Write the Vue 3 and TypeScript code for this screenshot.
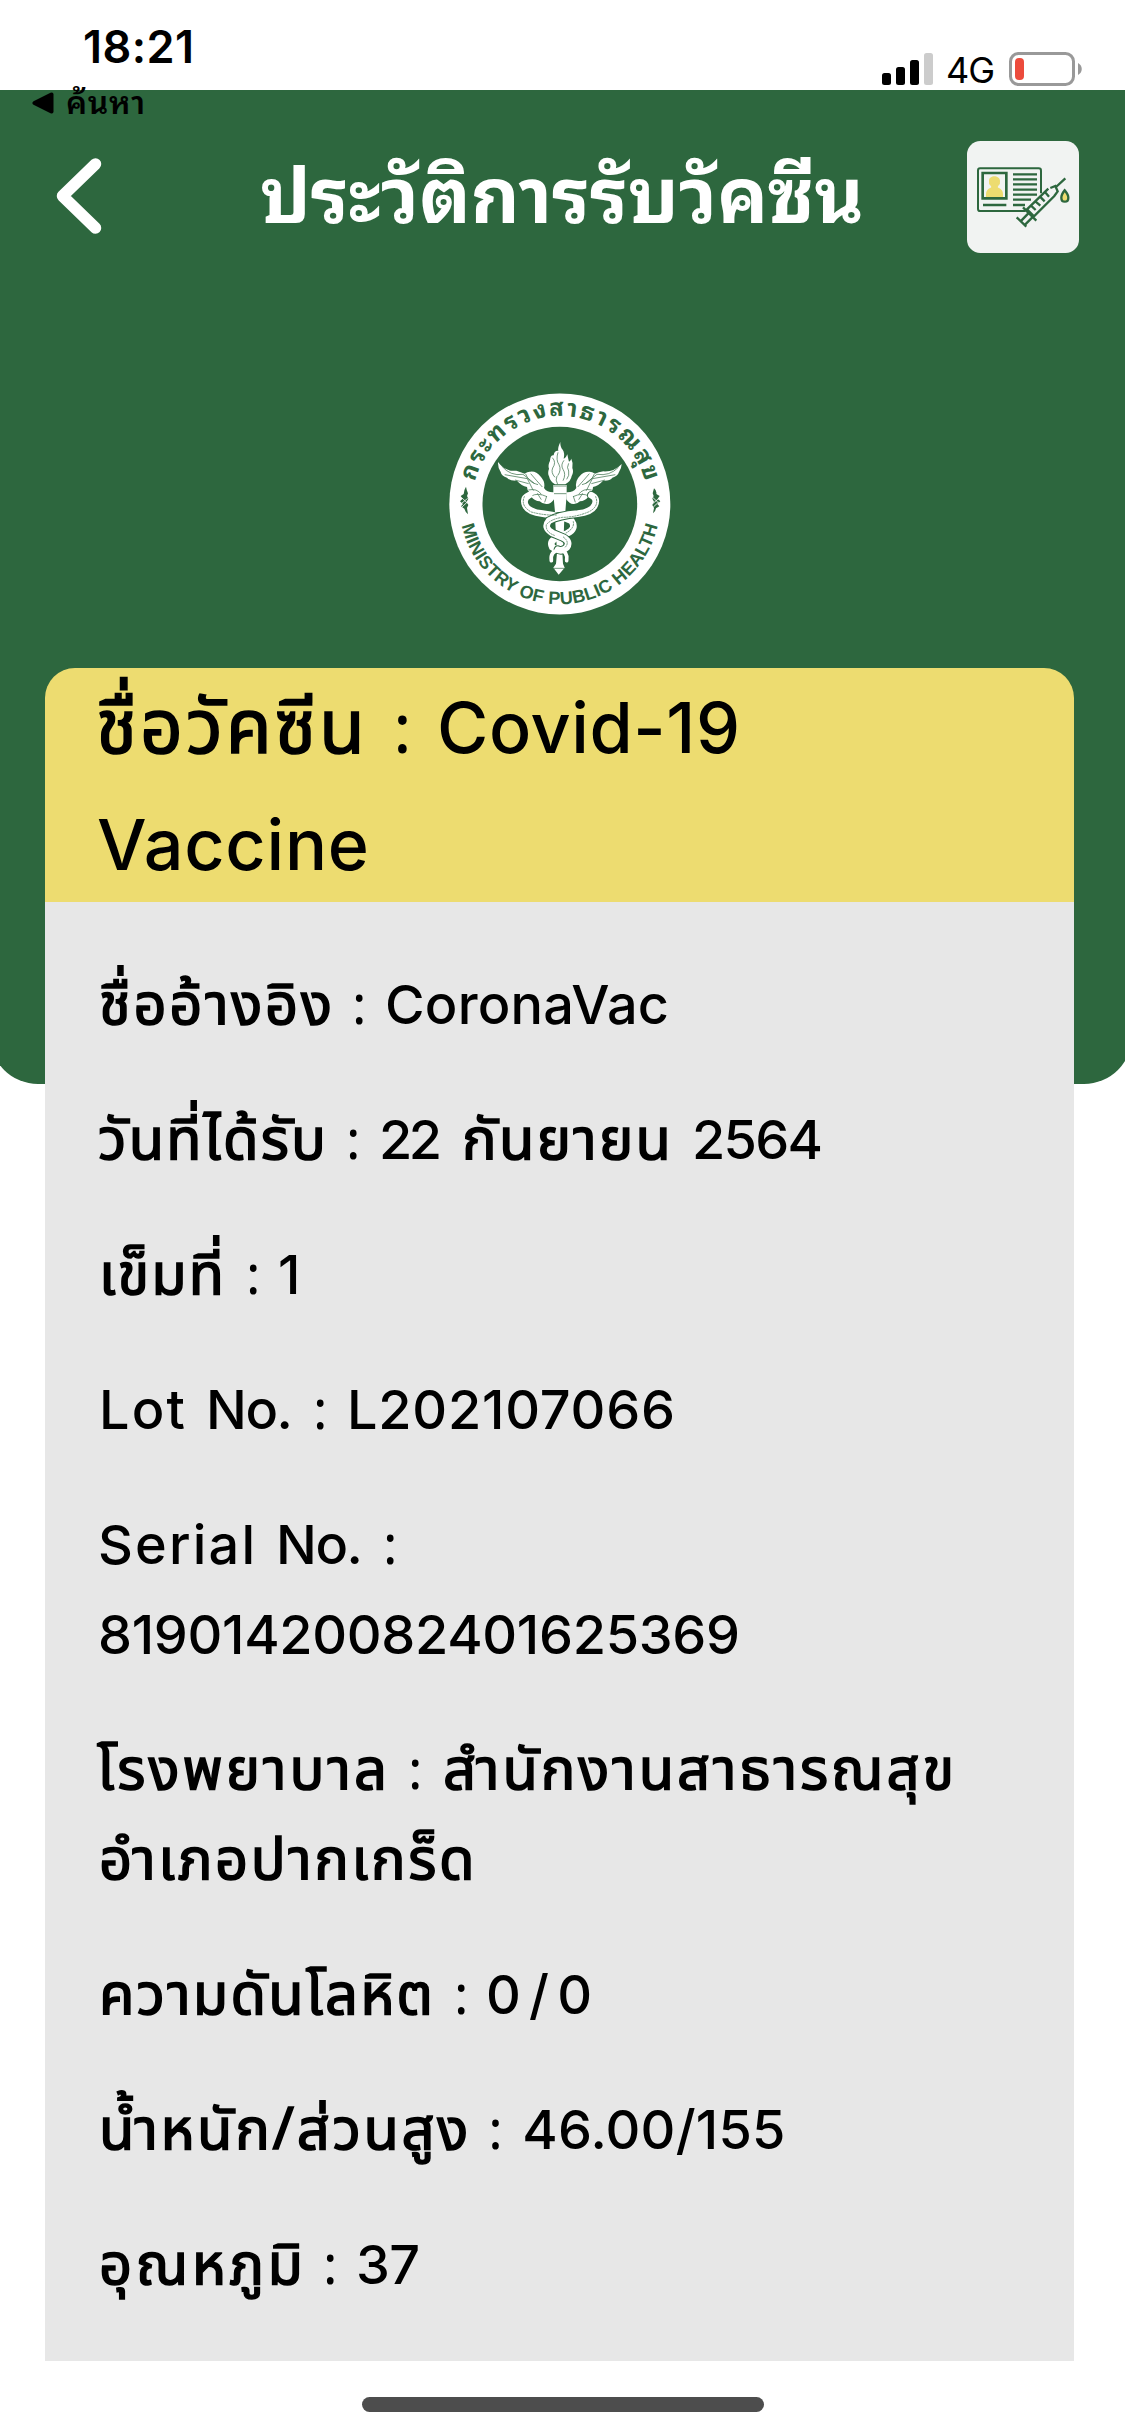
<script setup lang="ts">
import type { Directive } from 'vue'

interface Word { t: string; x: number; e: number }
interface Piece { t: string; w: number; kind: string }

const w = (t: string, x: number, e: number): Word => ({ t, x, e })

const titleLines: Word[][] = [
  [w('ชื่อวัคซีน', 99, 362), w(':', 396, 404), w('Covid-19', 440, 737)],
  [w('Vaccine', 100, 366)],
]

const records: Word[][][] = [
  [[w('ชื่ออ้างอิง', 102, 329), w(':', 355, 361), w('CoronaVac', 388, 666)]],
  [[w('วันที่ได้รับ', 101, 323), w(':', 349, 355), w('22', 382, 439), w('กันยายน', 465, 668), w('2564', 695, 820)]],
  [[w('เข็มที่', 102, 221), w(':', 249, 255), w('1', 281, 299)]],
  [[w('Lot', 102, 182), w('No.', 209, 290), w(':', 316, 322), w('L202107066', 350, 672)]],
  [[w('Serial', 101, 252), w('No.', 279, 360), w(':', 386, 392)], [w('81901420082401625369', 101, 737)]],
  [[w('โรงพยาบาล', 100, 384), w(':', 411, 417), w('สำนักงานสาธารณสุข', 446, 954)], [w('อำเภอปากเกร็ด', 102, 474)]],
  [[w('ความดันโลหิต', 102, 430), w(':', 457, 463), w('0/0', 489, 589)]],
  [[w('น้ำหนัก/ส่วนสูง', 102, 468), w(':', 494, 500), w('46.00/155', 528, 785)]],
  [[w('อุณหภูมิ', 102, 300), w(':', 326, 332), w('37', 359, 417)]],
]

const CARD_LEFT = 45
const BEARING = 3

// Turns word extents into a run of words separated by sized spaces.
function pieces(line: Word[]): Piece[] {
  const out: Piece[] = []
  let cursor = CARD_LEFT
  line.forEach((word, i) => {
    const start = word.x - BEARING
    out.push({ t: i ? ' ' : '', w: start - cursor, kind: 'gap' })
    const thai = /[\u0e00-\u0e7f]/.test(word.t)
    const kind = word.t === ':' ? 'colon' : thai ? 'thai' : 'latin'
    out.push({ t: word.t, w: word.e - word.x + BEARING * 2, kind })
    cursor = word.e + BEARING
  })
  return out
}

// Tracks a word so that it fills the width it was given.
const vFit: Directive<HTMLElement, number> = {
  mounted(el, binding) {
    if (el.textContent === ':') {
      el.style.width = `${binding.value}px`
      return
    }
    el.style.letterSpacing = '0px'
    const natural = el.getBoundingClientRect().width
    const count = [...(el.textContent ?? '').replace(/[\u0e31\u0e34-\u0e3a\u0e47-\u0e4e]/g, '')].length
    if (count > 1) {
      const spacing = (binding.value - natural) / (count - 1)
      el.style.letterSpacing = `${spacing}px`
      el.style.marginRight = `${-spacing}px`
    }
  },
}
</script>

<template>
  <div class="screen">
    <header class="status">
      <span v-fit="111" class="clock">18:21</span>
      <div class="indicators">
        <svg width="52" height="34" viewBox="0 0 52 34">
          <rect x="0" y="21" width="9" height="12" rx="2.5" />
          <rect x="14" y="15" width="9" height="18" rx="2.5" />
          <rect x="28" y="8" width="9" height="25" rx="2.5" />
          <rect x="42" y="1" width="9" height="32" rx="2.5" fill="#ccc" />
        </svg>
        <span class="network">4G</span>
        <svg width="74" height="34" viewBox="0 0 74 34">
          <rect x="1.5" y="1.5" width="63" height="31" rx="8" fill="none" stroke="#999" stroke-width="3" />
          <rect x="6" y="6" width="9" height="22" rx="4" fill="#ec4b3c" />
          <path d="M69 11C74 13.500 74 20.500 69 23Z" fill="#999" />
        </svg>
      </div>
    </header>

    <section class="hero">
      <div class="return">
        <svg width="22" height="22" viewBox="0 0 22 22">
          <path d="M1.500 9.200 18.500 .8Q21.500 0 21.500 2.500V19.500Q21.500 22 18.500 21.200L1.500 12.800Q-.8 11 1.500 9.200Z" />
        </svg>
        <span v-fit="79" class="return-text">ค้นหา</span>
      </div>

      <div class="nav">
        <svg class="chevron" width="46" height="76" viewBox="0 0 46 76">
          <path d="M39.500 6 6.500 38 39.500 70" fill="none" stroke="#fff" stroke-width="11.500" stroke-linecap="round" stroke-linejoin="round" />
        </svg>
        <h1 class="heading"><span v-fit="604">ประวัติการรับวัคซีน</span></h1>
        <svg class="card-icon" width="112" height="112" viewBox="6 17 336 336">
          <rect x="6" y="17" width="336" height="336" rx="40" fill="#f1f3f2" />
          <g fill="none" stroke="#2d673e" stroke-width="6">
            <path d="M182 227H45Q39 227 39 220V106Q39 99 45 99H221Q228 99 228 106V174" />
            <path d="M53 113H124V189H53Z" stroke-width="8" />
            <path d="M144 117H216M144 132H216M144 147H216M144 163H216M144 178H216M144 193H198M144 209H180M54 209H124" stroke-width="7" />
            <path d="M273 155 301 129M256 158 271 152 278 168 268 182 207 243 186 222 250 160M174 216 214 256M190 234 166 259M202 246 178 270M155 246 184 274M225 184 239 198M240 170 252 184M211 198 226 211M198 211 212 224" stroke-width="7" />
          </g>
          <path fill="#eddc70" d="M63 185V176Q63 162 77 157Q81 155 77 151Q70 145 72 136C72 118 104 118 105 136Q107 145 100 151Q96 155 100 157Q114 162 114 176V185Z" />
          <path d="M299 165Q289 178 289 187C289 203 310 203 310 187Q310 178 299 165Z" fill="#eddc70" stroke="#2d673e" stroke-width="7" />
        </svg>
      </div>

      <svg class="emblem" width="222" height="222" viewBox="56 41 666 666">
        <defs>
          <path id="arc-top" d="M125 374A264 264 0 0 1 653 374" />
          <path id="arc-bottom" d="M87 374A301 301 0 0 0 689 374" />
        </defs>
        <circle cx="388.500" cy="374" r="331.500" fill="#fff" />
        <circle cx="388.500" cy="374" r="232" fill="#2d673e" />
        <text class="seal-thai" text-anchor="middle">
          <textPath href="#arc-top" startOffset="50%" textLength="695">กระทรวงสาธารณสุข</textPath>
        </text>
        <text class="seal-latin" text-anchor="middle">
          <textPath href="#arc-bottom" startOffset="50%" textLength="815">MINISTRY OF PUBLIC HEALTH</textPath>
        </text>
        <g fill="#2d673e">
          <path d="M107 322Q109 334 113 342L110 350 114 358 109 367 114 377 110 386 113 405Q104 396 102 388L92 381 98 374 89 366 97 358 91 350 100 344Q101 331 107 322Z" />
          <path d="M671 327Q680 334 678 344L688 350 682 358 690 366 681 374 687 381 677 387Q676 396 668 402L671 386 666 377 671 367 666 358 670 350 667 342Z" />
        </g>
        <g stroke="#fff" stroke-width="2.500" fill="none">
          <path d="M94 355 112 372M94 372 112 357M95 383 111 368M668 355 686 372M668 372 686 357M669 383 685 368" />
        </g>

        <!-- wings -->
        <g fill="#fff">
          <path d="M203 248Q225 278 258 274Q272 279 283 283Q292 276 300 277Q318 275 330 291Q346 308 341 326Q350 340 371 339V360Q362 374 350 374Q337 375 328 366Q313 365 303 352Q291 351 298 340Q290 334 290 323Q274 320 260 304Q238 305 230 295Q214 291 211 278Q202 265 203 248Z" />
          <path d="M574 254Q552 278 519 276Q505 279 494 283Q484 276 476 277Q460 276 449 289Q433 304 438 326Q429 340 408 339V360Q417 374 429 374Q440 375 449 366Q464 365 474 352Q486 351 479 340Q488 334 488 323Q504 320 518 304Q540 305 546 295Q562 291 566 278Q574 265 574 254Z" />
          <!-- flame -->
          <path d="M390 188Q381 207 384 214Q371 213 370 228Q360 227 359 244Q352 258 356 268Q351 282 356 291Q359 306 374 315H405Q422 305 424 290Q431 278 426 266Q429 250 422 235Q425 240 416 247Q413 237 411 225Q405 238 400 238Q404 221 397 211Q389 203 390 188Z" />
          <!-- staff -->
          <path d="M369 317H409V345L405 398H374L369 345ZM374 414H402L399 500H379ZM380 520H396L398 553 403 565 385 586 369 565 377 553Z" />
        </g>
        <g fill="none" stroke="#2d673e" stroke-width="2">
          <path d="M366 235Q379 249 367 266Q361 280 374 294M383 219Q376 242 386 256Q394 272 382 289M401 243Q390 257 398 270Q408 285 398 304M415 252Q408 265 415 275Q418 289 409 300M380 290Q374 302 382 315M370 320H408M371 343H408M371 567H401" />
          <path d="M214 260Q240 291 278 285L312 312M223 286 291 298 309 334M254 302 295 313M286 284Q295 310 323 316M301 283Q318 303 336 323M294 332Q320 326 333 345M303 350Q322 339 350 352M321 342 333 361M349 351 343 369" />
          <path d="M564 264Q538 291 500 285L466 312M555 286 486 298 468 334M524 302 483 313M492 284Q482 310 455 316M477 283Q460 303 442 323M484 332Q458 326 445 345M475 350Q456 339 428 352M457 342 445 361M429 351 435 369" />
        </g>

        <!-- entwined serpents -->
        <g fill="none" stroke-linecap="round">
          <path d="M296 348Q276 357 285 378Q293 398 337 403Q397 411 423 424Q440 448 411 462L383 474Q355 484 366 504Q374 511 389 507" stroke="#fff" stroke-width="20" />
          <path d="M483 348Q503 357 493 378Q485 398 442 403Q384 408 356 424Q338 445 366 461L397 474Q422 486 409 505Q396 517 383 511" stroke="#2d673e" stroke-width="26" />
          <path d="M483 348Q503 357 493 378Q485 398 442 403Q384 408 356 424Q338 445 366 461L397 474Q422 486 409 505Q396 517 383 511" stroke="#fff" stroke-width="20" />
          <path d="M389 509Q414 518 409 544M386 512Q359 516 363 544" stroke="#fff" stroke-width="11" />
          <path d="M282 352Q270 380 303 398Q344 409 379 407M496 352Q508 382 474 398Q435 414 396 414Q362 419 348 436Q345 458 372 468M429 427Q433 447 407 461M399 473Q421 490 402 506" stroke="#2d673e" stroke-width="2" stroke-dasharray="4 4" />
        </g>
      </svg>
    </section>

    <main class="card">
      <div class="card-head">
        <div v-for="(line, i) in titleLines" :key="i" class="line">
          <template v-for="(p, j) in pieces(line)" :key="j">
            <span v-if="p.kind === 'gap'" class="gap" :style="{ width: p.w + 'px' }">{{ p.t }}</span>
            <span v-else v-fit="p.w" :class="p.kind">{{ p.t }}</span>
          </template>
        </div>
      </div>
      <div class="card-body">
        <div v-for="(record, r) in records" :key="r" class="record">
          <div v-for="(line, i) in record" :key="i" class="line">
            <template v-for="(p, j) in pieces(line)" :key="j">
              <span v-if="p.kind === 'gap'" class="gap" :style="{ width: p.w + 'px' }">{{ p.t }}</span>
              <span v-else v-fit="p.w" :class="p.kind">{{ p.t }}</span>
            </template>
          </div>
        </div>
      </div>
    </main>

    <div class="home-bar"></div>
  </div>
</template>

<style>
html,
body {
  margin: 0;
  background: #fff;
}
</style>

<style scoped>
.screen {
  width: 1125px;
  height: 2436px;
  overflow: hidden;
  background: #fff;
  color: #000;
  font-family: "Noto Sans", "Noto Sans Thai", sans-serif;
  display: flex;
  flex-direction: column;
}
.status {
  height: 90px;
  flex: none;
  display: flex;
  justify-content: space-between;
  box-sizing: border-box;
  padding: 20px 42px 0 83px;
}
.clock {
  font: 600 45px/54px Inter, sans-serif;
  white-space: nowrap;
  align-self: flex-start;
}
.indicators {
  display: flex;
  align-items: flex-start;
  padding-top: 32px;
}
.network {
  font: 400 36px/36px Inter, sans-serif;
  letter-spacing: -1px;
  margin: 0 14px 0 12px;
  width: 49px;
}
.hero {
  flex: none;
  height: 994px;
  margin: 0 -7px 0 -10px;
  padding-left: 10px;
  padding-right: 7px;
  box-sizing: border-box;
  background: #2d673e;
  border-radius: 0 0 48px 48px;
  display: flex;
  flex-direction: column;
}
.return {
  height: 50px;
  display: flex;
  align-items: flex-start;
  padding: 2px 0 0 32px;
  box-sizing: border-box;
}
.return-text {
  font-family: "Noto Sans Thai Looped", Thonburi, Loma, Waree, Garuda, "Noto Sans", sans-serif;
  font-size: 32px;
  line-height: 32px;
  font-weight: 600;
  margin-left: 12px;
  white-space: nowrap;
  margin-top: -8px;
}
.nav {
  height: 114px;
  display: flex;
  align-items: flex-start;
}
.chevron {
  margin: 18px 0 0 56px;
}
.heading {
  margin: 0 0 0 158px;
  width: 707px;
  font-family: "Noto Sans Thai Looped", Thonburi, Loma, Waree, Garuda, "Noto Sans", sans-serif;
  font-size: 76px;
  line-height: 98px;
  font-weight: 700;
  color: #fff;
  white-space: nowrap;
}
.card-icon {
  margin-top: 1px;
}
.emblem {
  margin: 139px 0 0 449px;
  overflow: visible;
}
.seal-thai {
  font: 700 72px "Noto Sans Thai Looped", Loma, Waree, Garuda, "Noto Sans", sans-serif;
  fill: #2d673e;
}
.seal-latin {
  font: 700 54px "Liberation Sans Narrow", "Liberation Sans", sans-serif;
  fill: #2d673e;
}
.card {
  flex: none;
  width: 1029px;
  margin: -416px 0 0 45px;
  border-radius: 30px 30px 0 0;
  overflow: hidden;
  z-index: 1;
}
.card-head {
  background: #eddc70;
  height: 234px;
  font-size: 70px;
}
.card-head .line {
  height: 117px;
  line-height: 116px;
}
.card-body {
  background: #e7e7e7;
  height: 1459px;
  box-sizing: border-box;
  padding-top: 56px;
  display: flex;
  flex-direction: column;
  gap: 45px;
  font-size: 54px;
}
.card-body .line {
  height: 90px;
  line-height: 90px;
}
.line {
  white-space: nowrap;
}
.line > span {
  line-height: 0;
}
.thai {
  font-size: 1.07em;
  -webkit-text-stroke: 1.6px #000;
}
.latin {
  font-family: Inter, "Noto Sans", sans-serif;
  font-weight: 500;
}
.colon {
  display: inline-block;
  text-align: center;
}
.gap {
  display: inline-block;
  white-space: pre;
}
.home-bar {
  width: 402px;
  height: 15px;
  border-radius: 8px;
  background: #4d4d4d;
  margin: 36px 0 0 362px;
}
</style>
